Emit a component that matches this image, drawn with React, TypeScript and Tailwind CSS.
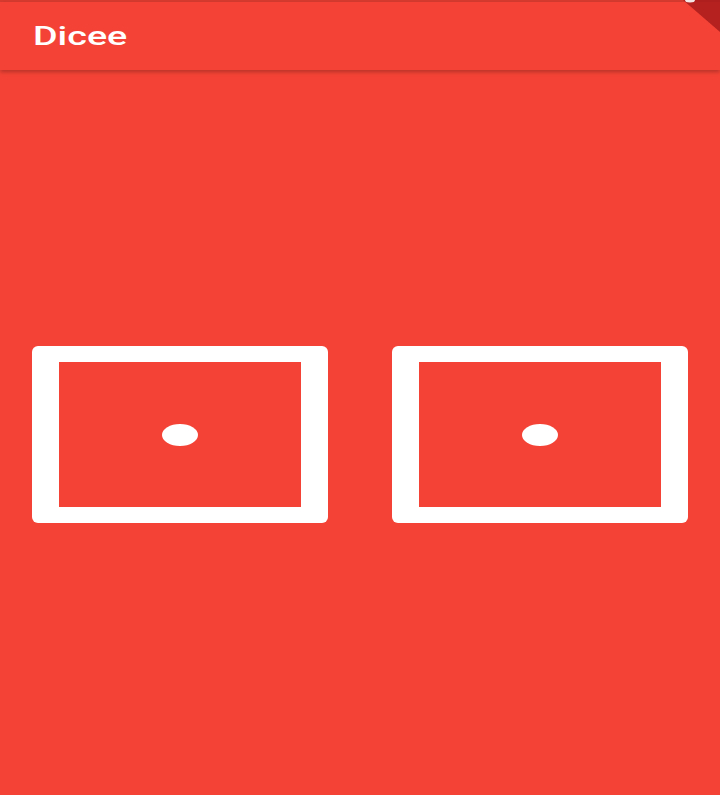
import * as React from "react";

function Dice() {
  return (
    <div className="flex h-[177px] flex-1 items-center justify-center rounded-[6px] bg-white px-[27px] py-4">
      <div className="flex h-full w-full items-center justify-center bg-[#f44336]">
        <div className="h-[22px] w-[36px] rounded-[50%] bg-white" />
      </div>
    </div>
  );
}

export default function App() {
  return (
    <div
      className="relative flex h-[795px] w-[720px] flex-col overflow-hidden bg-[#f44336]"
      style={{ fontFamily: "Roboto, 'Liberation Sans', sans-serif" }}
    >
      <div className="h-[2px] w-full bg-[#d83b30]" />
      <div className="z-10 flex h-[68px] items-center bg-[#f44336] pl-[33px] shadow-[0_2px_4px_rgba(0,0,0,0.25)]">
        <span className="inline-block origin-left scale-x-[1.45] text-[26px] font-medium leading-none text-white">
          Dicee
        </span>
      </div>
      <div className="flex flex-1 items-center gap-16 px-8 pt-[4px]">
        <Dice />
        <Dice />
      </div>

      {/* debug banner corner */}
      <svg
        className="absolute right-0 top-0 z-20"
        width="40"
        height="34"
        viewBox="0 0 40 34"
      >
        <polygon points="3,0 40,0 40,32" fill="#a81b1b" fillOpacity="0.85" />
        <ellipse cx="10" cy="0" rx="5" ry="2.5" fill="#f3e6e6" />
      </svg>
    </div>
  );
}
